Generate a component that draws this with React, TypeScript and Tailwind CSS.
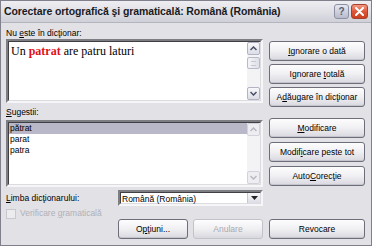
import React from "react";

const font = "font-['Liberation_Sans',Arial,sans-serif]";

function U({ children }: { children: React.ReactNode }) {
  return <span className="underline decoration-[1px] underline-offset-[1px]">{children}</span>;
}

function Btn({
  children,
  disabled = false,
  className = "",
}: {
  children: React.ReactNode;
  disabled?: boolean;
  className?: string;
}) {
  return (
    <div
      className={`h-[20px] flex items-center justify-center rounded-[3px] border bg-gradient-to-b from-[#fdfdfe] via-[#f0f0f3] to-[#d8d8df] text-[8.5px] ${
        disabled ? "border-[#c2c2ca] text-[#a8a8b0]" : "border-[#6e6e7a] text-black shadow-[inset_0_-1px_0_#c4c4cc]"
      } ${className}`}
    >
      <span className="whitespace-nowrap">{children}</span>
    </div>
  );
}

function Arrow({ dir, disabled = false }: { dir: "up" | "down"; disabled?: boolean }) {
  const c = disabled ? "#b8b8c4" : "#4a4f66";
  return (
    <div
      className={`w-[13px] h-[13px] flex items-center justify-center rounded-[2px] border ${
        disabled ? "border-[#d2d2da] bg-[#eeeef2]" : "border-[#b2b4c4] bg-gradient-to-b from-[#f8f8fb] to-[#dcdde6]"
      }`}
    >
      <svg width="7" height="5" viewBox="0 0 7 5">
        <path
          d={dir === "up" ? "M0.5 4 L3.5 1 L6.5 4" : "M0.5 1 L3.5 4 L6.5 1"}
          fill="none"
          stroke={c}
          strokeWidth="1.5"
        />
      </svg>
    </div>
  );
}

function Scrollbar({ disabled = false, thumb = false }: { disabled?: boolean; thumb?: boolean }) {
  return (
    <div className="w-[13px] h-full flex flex-col justify-between bg-[#f3f3f6]">
      <div className="flex flex-col gap-[2px]">
        <Arrow dir="up" disabled={disabled} />
        {thumb && (
          <div className="w-[13px] h-[12px] rounded-[2px] border border-[#b8bac8] bg-gradient-to-r from-[#f4f4f8] to-[#dfe0e8] flex items-center justify-center">
            <div className="w-[5px] h-[5px] border-y border-[#c4c6d2]" />
          </div>
        )}
      </div>
      <Arrow dir="down" disabled={disabled} />
    </div>
  );
}

function Sunken({ children, className = "" }: { children: React.ReactNode; className?: string }) {
  return (
    <div className={`border-2 border-t-[#7d7d84] border-l-[#7d7d84] border-b-[#f6f6f8] border-r-[#f6f6f8] ${className}`}>
      <div className="h-full w-full border border-t-[#3f3f44] border-l-[#3f3f44] border-b-[#dcdce0] border-r-[#dcdce0] bg-white flex">
        {children}
      </div>
    </div>
  );
}

export default function App() {
  return (
    <div className={`w-[372px] h-[246px] overflow-hidden border border-[#80808c] bg-[#e2e2e6] flex flex-col ${font}`}>
      {/* title bar */}
      <div className="h-[22px] shrink-0 flex items-center justify-between pl-[3px] pr-[3px] bg-gradient-to-b from-[#eeeef2] via-[#e0e0e6] to-[#cfd0d8] border-b border-[#b4b4be]">
        <span className="text-[10.5px] font-bold text-[#1a1a22] tracking-[-0.1px] whitespace-nowrap">
          Corectare ortografică şi gramaticală: Română (România)
        </span>
        <div className="flex items-center gap-[2px]">
          <div className="w-[15px] h-[15px] rounded-[3px] border border-[#8d90a4] bg-gradient-to-b from-[#e6e8f0] to-[#b8bbcc] flex items-center justify-center text-[10px] font-bold text-[#5a5d70]">
            ?
          </div>
          <div className="w-[17px] h-[15px] rounded-[3px] border border-[#a8402e] bg-gradient-to-b from-[#f19a84] via-[#e0553a] to-[#c8401f] flex items-center justify-center">
            <svg width="9" height="9" viewBox="0 0 9 9">
              <path d="M1 1 L8 8 M8 1 L1 8" stroke="#fff" strokeWidth="2" strokeLinecap="round" />
            </svg>
          </div>
        </div>
      </div>

      {/* body */}
      <div className="flex-1 pl-[5px] pr-[5px] text-[8.5px] text-black">
        <div className="grid grid-cols-[257px_96px] gap-x-[6px]">
          {/* left column */}
          <div className="flex flex-col">
            <div className="mt-[5px] h-[11px] leading-[11px]">
              Nu <U>e</U>ste în dicţionar:
            </div>
            <Sunken className="h-[64px]">
              <div className="flex-1 pl-[2px] pt-[2px] font-['Liberation_Serif','Times_New_Roman',serif] text-[12px] leading-[14px]">
                Un <span className="font-bold text-[#e0101a]">patrat</span> are patru laturi
              </div>
              <Scrollbar thumb />
            </Sunken>
            <div className="mt-[4px] h-[11px] leading-[11px]">
              <U>S</U>ugestii:
            </div>
            <Sunken className="mt-[2px] h-[67px]">
              <div className="flex-1 flex flex-col leading-[11px]">
                <div className="bg-[#b8b8c8] pl-[1px] h-[11px]">pătrat</div>
                <div className="pl-[1px] h-[11px]">parat</div>
                <div className="pl-[1px] h-[11px]">patra</div>
              </div>
              <Scrollbar disabled />
            </Sunken>
          </div>

          {/* right column */}
          <div className="flex flex-col">
            <Btn className="mt-[18px]">
              <U>I</U>gnorare o dată
            </Btn>
            <Btn className="mt-[3px]">
              Ignorare <U>t</U>otală
            </Btn>
            <Btn className="mt-[3px]">
              A<U>d</U>ăugare în dicţionar
            </Btn>
            <Btn className="mt-[11px]">
              <U>M</U>odificare
            </Btn>
            <Btn className="mt-[4px]">
              Modif<U>i</U>care peste tot
            </Btn>
            <Btn className="mt-[4px]">
              Auto<U>C</U>orecţie
            </Btn>
          </div>
        </div>

        {/* bottom area */}
        <div className="mt-[3px] flex items-center h-[16px]">
          <div className="w-[112px]">
            <U>L</U>imba dicţionarului:
          </div>
          <Sunken className="w-[145px] h-[16px]">
            <div className="flex-1 pl-[1px] leading-[12px]">Română (România)</div>
            <div className="w-[13px] h-full flex items-center justify-center bg-gradient-to-b from-[#f6f6f9] to-[#dcdde5] border-l border-[#c8c8d2]">
              <svg width="7" height="4" viewBox="0 0 7 4">
                <path d="M0 0 L7 0 L3.5 4 Z" fill="#222" />
              </svg>
            </div>
          </Sunken>
        </div>
        <div className="mt-[2px] flex items-center h-[11px] gap-[4px] text-[#b0b0b8]">
          <div className="w-[10px] h-[10px] border border-[#c8c8cf] bg-[#ececef]" />
          <span>
            Verificare <U>g</U>ramaticală
          </span>
        </div>
        <div className="flex">
          <div className="w-[112px]" />
          <Btn className="w-[70px]">
            O<U>p</U>ţiuni...
          </Btn>
          <Btn disabled className="w-[70px] ml-[5px]">
            Anulare
          </Btn>
          <Btn className="w-[96px] ml-[6px]">Revocare</Btn>
        </div>
      </div>
    </div>
  );
}
